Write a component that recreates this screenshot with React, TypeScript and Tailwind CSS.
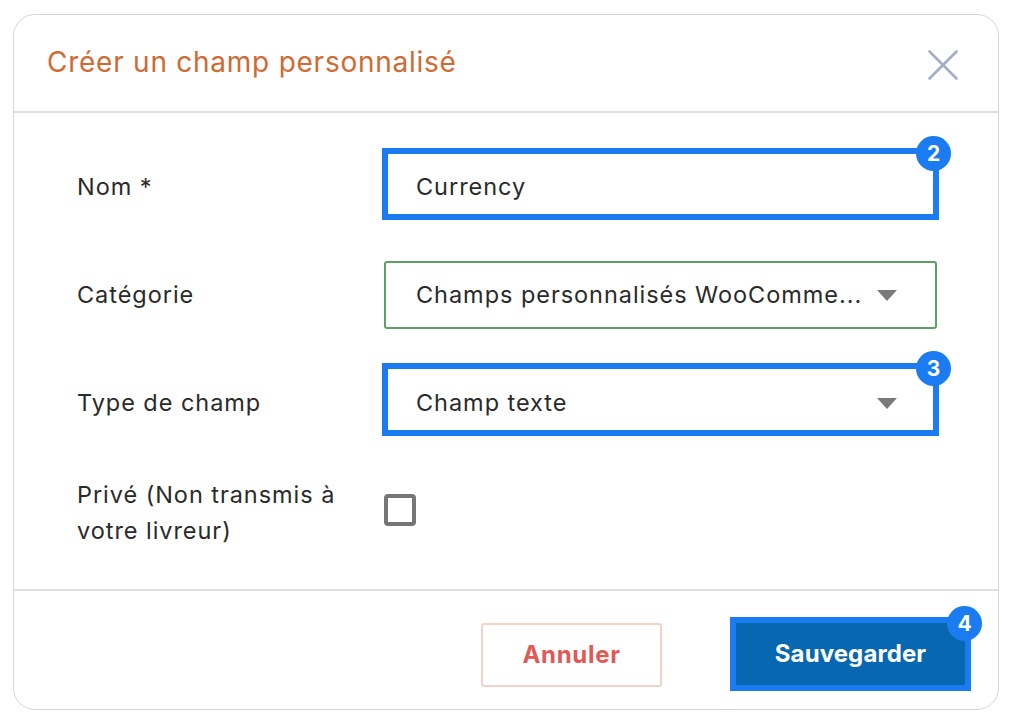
import React from "react";

const font = "font-['Inter','Liberation_Sans',sans-serif]";
const bodyText = "text-[23.5px] tracking-[0.95px] text-[#2a2a2a]";

function Badge({ n, className }: { n: string; className: string }) {
  return (
    <span className={`absolute z-10 flex h-[35px] w-[35px] items-center justify-center rounded-full bg-[#1a7cf0] text-[21px] font-bold leading-none tracking-normal text-white ${className}`}>
      {n}
    </span>
  );
}

function Caret() {
  return (
    <svg width="20" height="11" viewBox="0 0 20 11" className="shrink-0">
      <path d="M0 0H20L10 11Z" fill="#7a7a7a" />
    </svg>
  );
}

function Row({ label, children }: { label: React.ReactNode; children: React.ReactNode }) {
  return (
    <div className="flex h-[68px] items-center">
      <div className={`w-[307px] shrink-0 leading-[36px] ${bodyText}`}>{label}</div>
      <div className="relative w-[553px]">{children}</div>
    </div>
  );
}

export default function App() {
  return (
    <div className={`min-h-[724px] bg-white pl-[13px] pt-[14px] ${font}`}>
      <div className="flex h-[696px] w-[986px] flex-col rounded-[22px] border border-[#d6d6d6] bg-white">
        <header className="flex h-[98px] shrink-0 items-center justify-between border-b-2 border-[#dfdfdf] pl-[33px] pr-[40px]">
          <h1 className="mb-[2px] text-[28px] font-normal leading-none tracking-[0.75px] text-[#cf6a33]">Créer un champ personnalisé</h1>
          <svg width="30" height="30" viewBox="0 0 30 30" className="mt-[4px]" fill="none" stroke="#a3adc8" strokeWidth="2.6" strokeLinecap="round">
            <path d="M1.5 1.5L28.5 28.5M28.5 1.5L1.5 28.5" />
          </svg>
        </header>

        <main className="flex flex-1 flex-col gap-[40px] pl-[63px] pt-[40px]">
          <Row label="Nom *">
            <div className={`flex h-[68px] items-center px-[32px] ${bodyText}`}>Currency</div>
            <span className="absolute -left-[2px] -right-[2px] -top-[5px] h-[72px] border-[6px] border-[#1a7cf0]" />
            <Badge n="2" className="right-[-14px] top-[-17px]" />
          </Row>
          <Row label="Catégorie">
            <div className={`flex h-[68px] items-center justify-between rounded-[3px] border-2 border-[#5f9f66] pl-[30px] pr-[38px] ${bodyText}`}>
              <span>Champs personnalisés WooComme...</span>
              <Caret />
            </div>
          </Row>
          <Row label="Type de champ">
            <div className={`flex h-[68px] items-center justify-between pl-[32px] pr-[40px] ${bodyText}`}>
              <span>Champ texte</span>
              <Caret />
            </div>
            <span className="absolute -left-[2px] -right-[2px] -top-[6px] h-[73px] border-[6px] border-[#1a7cf0]" />
            <Badge n="3" className="right-[-14px] top-[-18px]" />
          </Row>
          <Row
            label={
              <div className="pt-[4px]">
                Privé (Non transmis à
                <br />
                votre livreur)
              </div>
            }
          >
            <div className="mb-[2px] h-[32px] w-[32px] rounded-[4px] border-[4px] border-[#767676]" />
          </Row>
        </main>

        <footer className="flex h-[120px] shrink-0 items-center justify-end gap-[68px] border-t-2 border-[#dfdfdf] pr-[27px]">
          <button className="mt-[9px] h-[64px] w-[181px] rounded-[3px] border-2 border-[#f3d2ce] text-[24px] font-bold tracking-[0.7px] text-[#df5a57]">Annuler</button>
          <button className="relative mt-[7px] h-[74px] w-[241px] border-[6px] border-[#1a7cf0] bg-[#0767b0] text-[24px] font-bold tracking-[0.1px] text-white">
            Sauvegarder
            <Badge n="4" className="right-[-17px] top-[-17px]" />
          </button>
        </footer>
      </div>
    </div>
  );
}
